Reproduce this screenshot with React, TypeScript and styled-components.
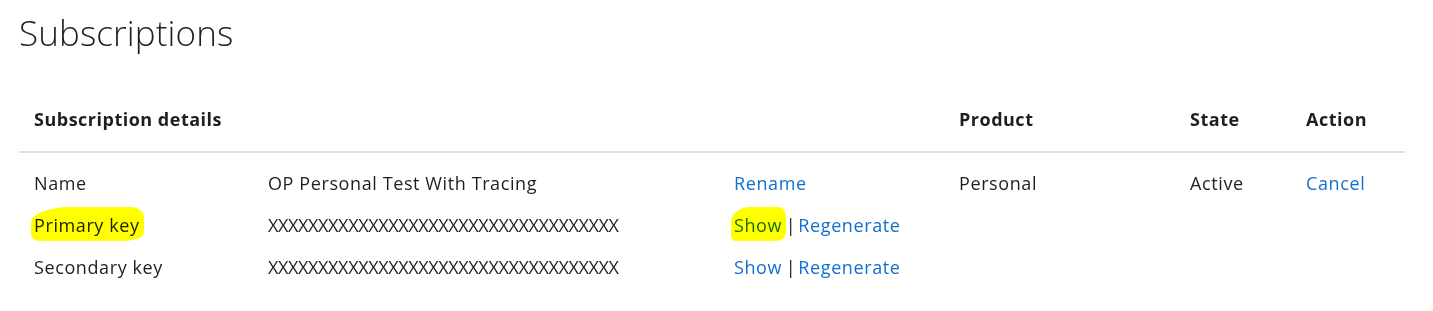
import React from 'react'
import styled, { createGlobalStyle } from 'styled-components'

const GlobalStyle = createGlobalStyle`
  html, body {
    margin: 0;
    padding: 0;
    background: #ffffff;
  }
  body {
    font-family: 'Open Sans', 'Noto Sans', 'Liberation Sans', sans-serif;
    color: #1f1f1f;
  }
`

type Row = {
  label: string
  value: string
  isKey?: boolean
  marked?: boolean
  links: string[]
  product?: string
  state?: string
  action?: string
}

const KEY_MASK = 'X'.repeat(35)

const rows: Row[] = [
  {
    label: 'Name',
    value: 'OP Personal Test With Tracing',
    links: ['Rename'],
    product: 'Personal',
    state: 'Active',
    action: 'Cancel',
  },
  { label: 'Primary key', value: KEY_MASK, isKey: true, marked: true, links: ['Show', 'Regenerate'] },
  { label: 'Secondary key', value: KEY_MASK, isKey: true, links: ['Show', 'Regenerate'] },
]

const columnWidths = [234, 466, 225, 231, 116, 114]

const App: React.FC = () => {
  return (
    <Page>
      <GlobalStyle />
      <Title>Subscriptions</Title>
      <Table>
        <colgroup>
          {columnWidths.map((w, i) => (
            <col key={i} style={{ width: w }} />
          ))}
        </colgroup>
        <thead>
          <tr>
            <HeadCell colSpan={3}>Subscription details</HeadCell>
            <HeadCell>Product</HeadCell>
            <HeadCell>State</HeadCell>
            <HeadCell>Action</HeadCell>
          </tr>
        </thead>
        <tbody>
          {rows.map((row, index) => (
            <BodyRow key={row.label} $first={index === 0}>
              <Cell>{row.marked ? <Marker>{row.label}</Marker> : row.label}</Cell>
              <Cell $masked={row.isKey}>{row.value}</Cell>
              <Cell>
                {row.links.map((link, i) => (
                  <React.Fragment key={link}>
                    {i > 0 && <Divider> | </Divider>}
                    {row.marked && i === 0 ? (
                      <Marker>
                        <LinkText href="#">{link}</LinkText>
                      </Marker>
                    ) : (
                      <LinkText href="#">{link}</LinkText>
                    )}
                  </React.Fragment>
                ))}
              </Cell>
              <Cell>{row.product}</Cell>
              <Cell>{row.state}</Cell>
              <Cell>{row.action && <LinkText href="#">{row.action}</LinkText>}</Cell>
            </BodyRow>
          ))}
        </tbody>
      </Table>
    </Page>
  )
}

const Page = styled.div`
  padding: 13px 28px 0 19px;
`

const Title = styled.h1`
  margin: 0 0 39px;
  font-size: 35px;
  line-height: 40px;
  font-weight: 300;
  letter-spacing: 0.1px;
  color: #1f1f1f;
`

const Table = styled.table`
  width: 1386px;
  table-layout: fixed;
  border-collapse: collapse;
  font-size: 18px;
  line-height: 24px;
  letter-spacing: 0.6px;
`

const HeadCell = styled.th`
  text-align: left;
  font-weight: 700;
  font-size: 18px;
  letter-spacing: 0.5px;
  padding: 15px 15px 20px;
  border-bottom: 2px solid #dde1e5;
  color: #1f1f1f;
`

const BodyRow = styled.tr<{ $first?: boolean }>`
  & > td {
    padding-top: ${({ $first }) => ($first ? '18px' : '9px')};
  }
`

const Cell = styled.td<{ $masked?: boolean }>`
  padding: 9px 15px;
  white-space: nowrap;
  overflow: hidden;
  vertical-align: middle;
  letter-spacing: ${({ $masked }) => ($masked ? '-0.38px' : 'inherit')};
`

const LinkText = styled.a`
  color: #1170cf;
  text-decoration: none;
`

const Divider = styled.span`
  color: #1f1f1f;
  letter-spacing: -1px;
`

const Marker = styled.span`
  position: relative;
  display: inline-block;

  &::before {
    content: '';
    position: absolute;
    top: -6px;
    bottom: -4px;
    left: -3px;
    right: -4px;
    background: #ffff00;
    mix-blend-mode: multiply;
    border-radius: 35% 12% 18% 8% / 45% 30% 25% 20%;
    pointer-events: none;
  }
`

export default App
